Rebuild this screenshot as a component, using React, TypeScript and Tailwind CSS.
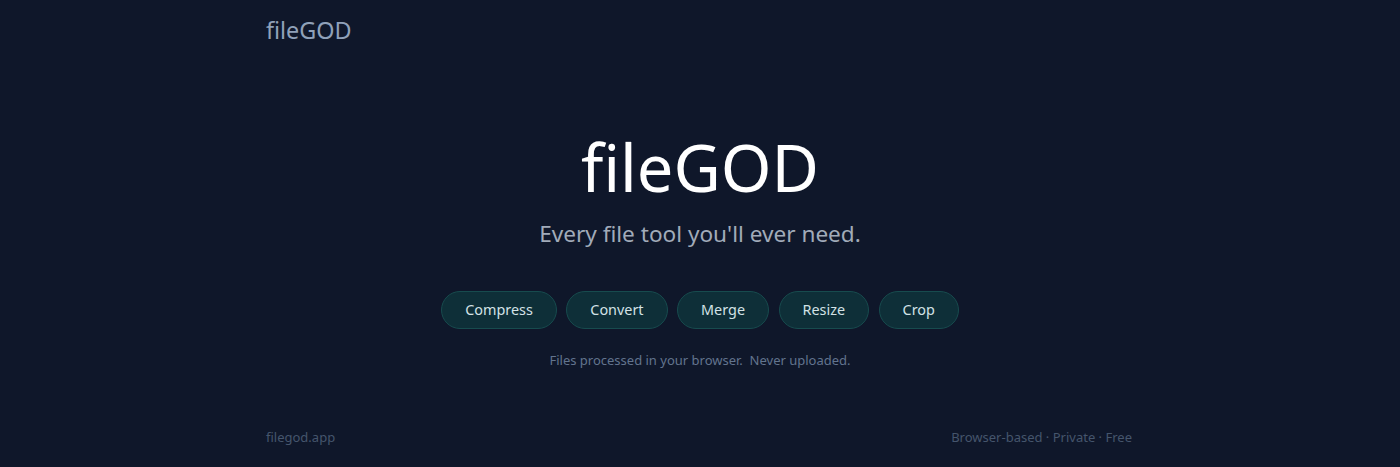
import React from "react";

const tools = ["Compress", "Convert", "Merge", "Resize", "Crop"];

export default function App() {
  return (
    <div
      className="min-h-screen flex flex-col bg-[#0f172a] text-slate-100"
      style={{ fontFamily: '"Noto Sans", "Open Sans", sans-serif' }}
    >
      <header className="w-full max-w-4xl mx-auto px-4 pt-4">
        <div className="text-[23.4px] leading-[28px] text-slate-400 -ml-[2px]">fileGOD</div>
      </header>
      <main className="flex-1 flex flex-col items-center justify-center pt-[34px]">
        <h1 className="text-[65px] leading-none text-white font-normal">fileGOD</h1>
        <p className="mt-[17px] text-[22.6px] text-[#a1abb9]">Every file tool you'll ever need.</p>
        <div className="mt-[40px] flex gap-[9.5px]">
          {tools.map((t) => (
            <button
              key={t}
              className="h-[38px] px-[23px] rounded-full bg-[#0e2f38] border border-[#174b4e] text-[14.4px] text-[#d3e2e6]"
            >
              {t}
            </button>
          ))}
        </div>
        <p className="mt-[22px] text-[13px] text-slate-500">Files processed in your browser.&nbsp; Never uploaded.</p>
      </main>
      <footer className="w-full max-w-4xl mx-auto px-4 pb-5 flex justify-between text-[13px] text-slate-600">
        <span className="-ml-[2px]">filegod.app</span>
        <span>Browser-based · Private · Free</span>
      </footer>
    </div>
  );
}
